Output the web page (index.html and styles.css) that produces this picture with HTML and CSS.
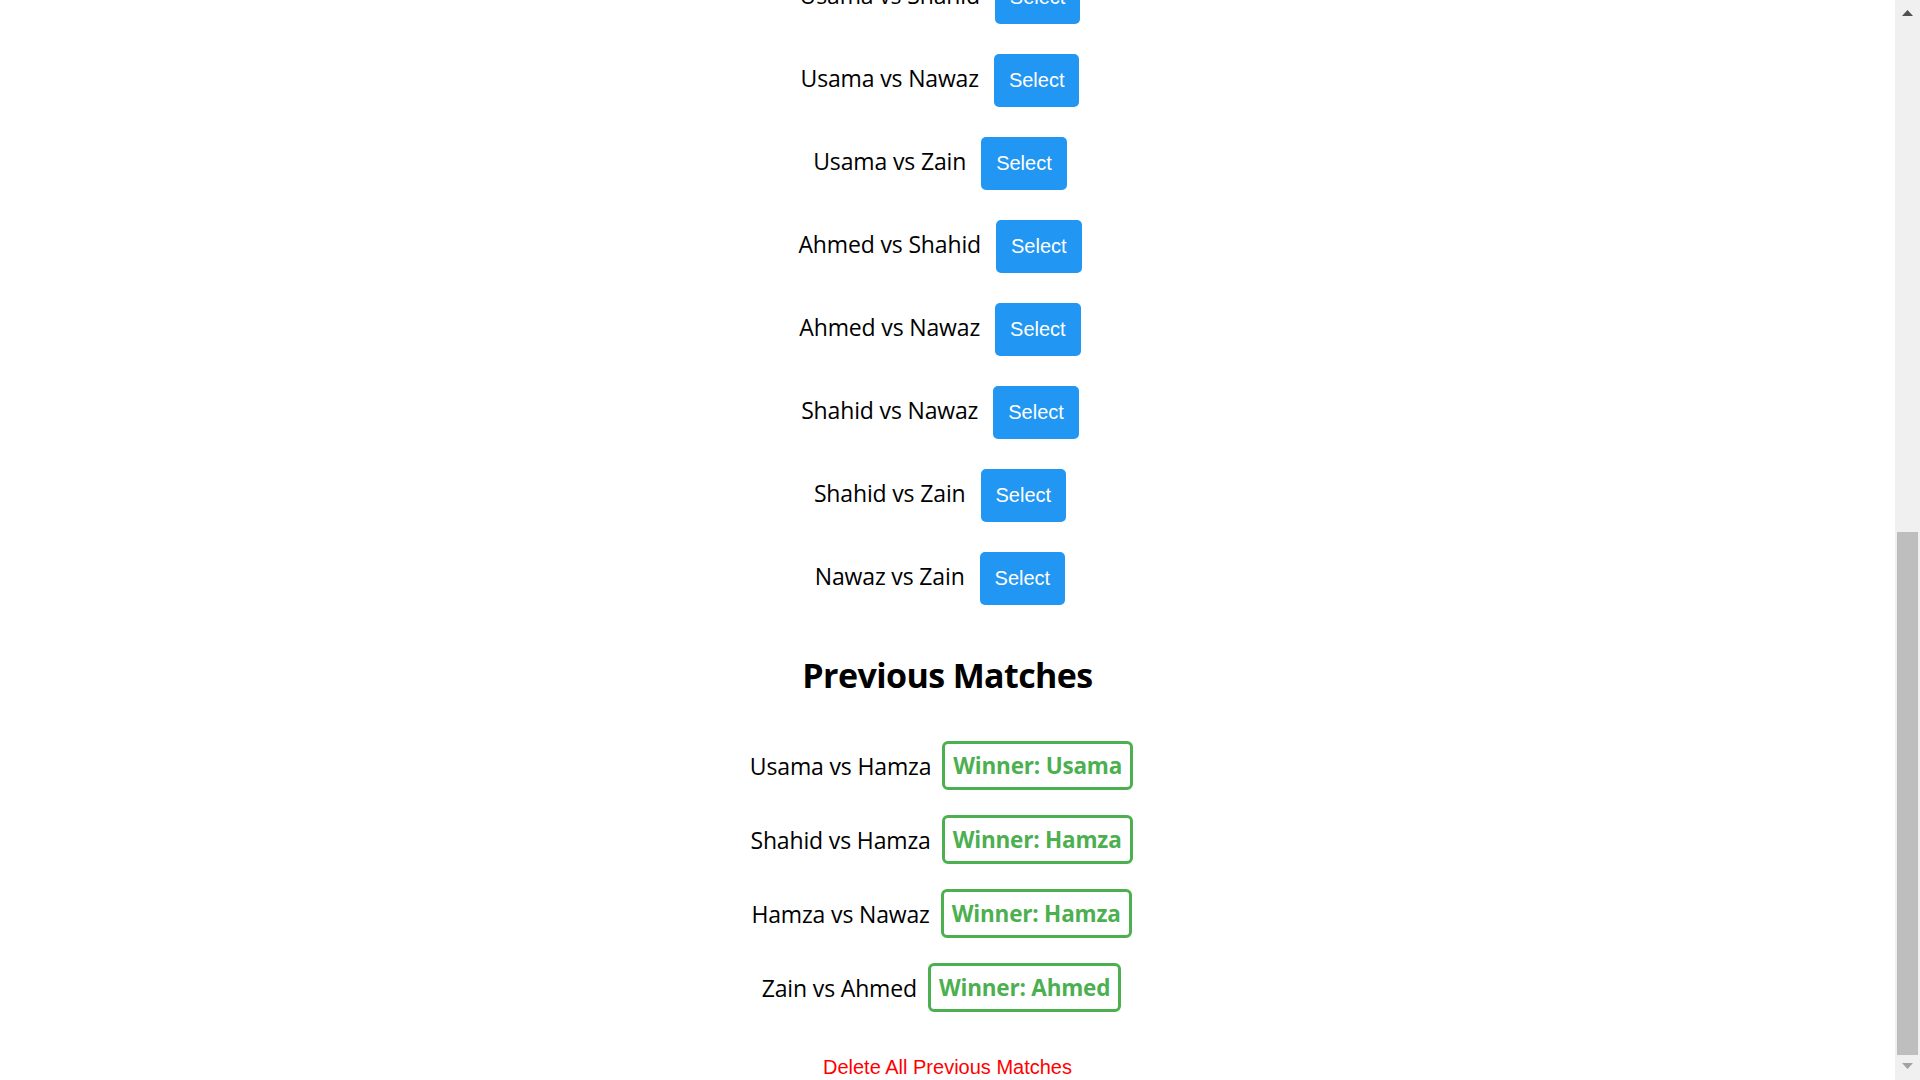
FILE: index.html
```html
<!DOCTYPE html>
<html lang="en">
<head>
<meta charset="utf-8">
<title>Matches</title>
<link rel="stylesheet" href="styles.css">
</head>
<body>
<div class="page">
  <main class="content">
    <section class="upcoming">
      <div class="match-row"><span class="match-label">Usama vs Shahid</span><button class="select-btn">Select</button></div>
      <div class="match-row"><span class="match-label">Usama vs Nawaz</span><button class="select-btn">Select</button></div>
      <div class="match-row"><span class="match-label">Usama vs Zain</span><button class="select-btn">Select</button></div>
      <div class="match-row"><span class="match-label">Ahmed vs Shahid</span><button class="select-btn">Select</button></div>
      <div class="match-row"><span class="match-label">Ahmed vs Nawaz</span><button class="select-btn">Select</button></div>
      <div class="match-row"><span class="match-label">Shahid vs Nawaz</span><button class="select-btn">Select</button></div>
      <div class="match-row"><span class="match-label">Shahid vs Zain</span><button class="select-btn">Select</button></div>
      <div class="match-row"><span class="match-label">Nawaz vs Zain</span><button class="select-btn">Select</button></div>
    </section>

    <h2 class="section-title">Previous Matches</h2>

    <section class="previous">
      <div class="prev-row"><span class="match-label">Usama vs Hamza</span><span class="winner">Winner: Usama</span></div>
      <div class="prev-row"><span class="match-label">Shahid vs Hamza</span><span class="winner">Winner: Hamza</span></div>
      <div class="prev-row"><span class="match-label">Hamza vs Nawaz</span><span class="winner">Winner: Hamza</span></div>
      <div class="prev-row"><span class="match-label">Zain vs Ahmed</span><span class="winner">Winner: Ahmed</span></div>
    </section>

    <button class="delete-btn">Delete All Previous Matches</button>
  </main>

  <aside class="scrollbar" aria-hidden="true">
    <div class="sb-arrow sb-up">
      <svg width="11" height="6" viewBox="0 0 11 6"><polygon points="5.5,0 11,6 0,6" fill="#505050"/></svg>
    </div>
    <div class="sb-track"><div class="sb-thumb"></div></div>
    <div class="sb-arrow sb-down">
      <svg width="11" height="6" viewBox="0 0 11 6"><polygon points="0,0 11,0 5.5,6" fill="#a3a3a3"/></svg>
    </div>
  </aside>
</div>
</body>
</html>
```

FILE: styles.css
```css
html, body {
  margin: 0;
  padding: 0;
  height: 100%;
  overflow: hidden;
  background: #ffffff;
}

.page {
  display: flex;
  width: 1920px;
  height: 1080px;
  overflow: hidden;
}

.content {
  flex: 1;
  display: flex;
  flex-direction: column;
  align-items: center;
  overflow: hidden;
  font-family: "Open Sans", "Noto Sans", sans-serif;
  color: #000;
}

.upcoming {
  display: flex;
  flex-direction: column;
  align-items: center;
  gap: 30px;
  margin-top: -29px;
}

.match-row,
.prev-row {
  display: flex;
  align-items: center;
}

.match-row {
  height: 53px;
}

.match-label {
  font-size: 23px;
  letter-spacing: -0.15px;
  white-space: nowrap;
}

.match-row .match-label {
  margin-bottom: 5px;
}

.prev-row .match-label {
  margin-top: 1px;
}

.select-btn {
  height: 53px;
  padding: 0 15px;
  margin: 0 15px 0 15px;
  border: none;
  border-radius: 5px;
  background: #2196f3;
  color: #ffffff;
  font-family: "Liberation Sans", Arial, sans-serif;
  font-size: 20px;
  line-height: 53px;
}

.section-title {
  margin: 46px 0 0 0;
  font-size: 34px;
  line-height: 48px;
  letter-spacing: -0.6px;
  font-weight: 700;
}

.previous {
  display: flex;
  flex-direction: column;
  align-items: center;
  gap: 25px;
  margin-top: 42px;
}

.prev-row {
  height: 49px;
}

.winner {
  box-sizing: border-box;
  height: 49px;
  display: flex;
  align-items: center;
  padding: 0 8px;
  margin: 0 12px 0 11px;
  border: 3px solid #4caf50;
  border-radius: 6px;
  color: #4caf50;
  font-weight: 700;
  font-size: 22.5px;
  letter-spacing: -0.2px;
  white-space: nowrap;
}

.delete-btn {
  margin-top: 44px;
  padding: 0;
  border: none;
  background: transparent;
  color: #ff0000;
  font-family: "Liberation Sans", Arial, sans-serif;
  font-size: 20px;
  line-height: 23px;
}

/* fake scrollbar (page is scrolled to the bottom) */
.scrollbar {
  width: 25px;
  flex: 0 0 25px;
  display: flex;
  flex-direction: column;
  background: #f0f0f0;
}

.sb-arrow {
  height: 25px;
  display: flex;
  justify-content: center;
}

.sb-up {
  align-items: flex-start;
  padding-top: 10px;
  box-sizing: border-box;
}

.sb-down {
  align-items: flex-start;
  padding-top: 8px;
  box-sizing: border-box;
}

.sb-down svg,
.sb-up svg {
  display: block;
}

.sb-track {
  flex: 1;
  display: flex;
  flex-direction: column;
  justify-content: flex-end;
}

.sb-thumb {
  height: 523px;
  margin: 0 2px;
  background: #bebebe;
}
```
